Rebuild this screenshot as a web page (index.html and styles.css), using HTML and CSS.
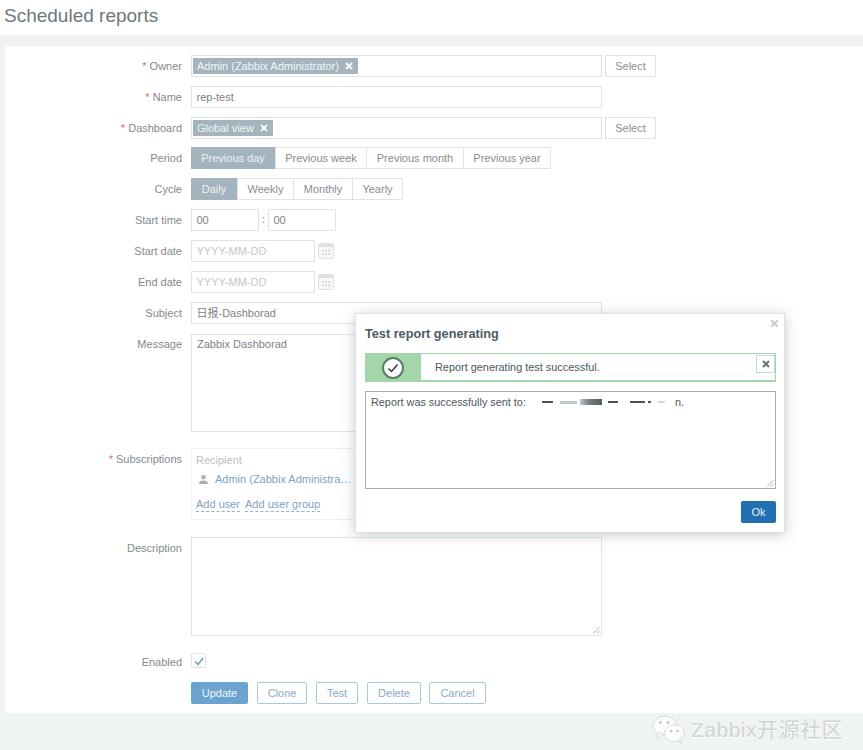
FILE: index.html
```html
<!DOCTYPE html>
<html lang="en">
<head>
<meta charset="utf-8">
<title>Scheduled reports</title>
<link rel="stylesheet" href="styles.css">
</head>
<body>
<header class="page-head"><h1>Scheduled reports</h1></header>
<main class="panel">
  <form class="form">
    <div class="row"><label class="lbl"><span class="req">*</span> Owner</label>
      <div class="field"><div class="box w411"><span class="tag">Admin (Zabbix Administrator) <svg class="tag-x" viewBox="0 0 10 10"><path d="M2 2l6 6M8 2l-6 6"/></svg></span></div><span class="btn-select">Select</span></div></div>
    <div class="row"><label class="lbl"><span class="req">*</span> Name</label>
      <div class="field"><div class="box w411 text">rep-test</div></div></div>
    <div class="row"><label class="lbl"><span class="req">*</span> Dashboard</label>
      <div class="field"><div class="box w411"><span class="tag">Global view <svg class="tag-x" viewBox="0 0 10 10"><path d="M2 2l6 6M8 2l-6 6"/></svg></span></div><span class="btn-select">Select</span></div></div>
    <div class="row period"><label class="lbl">Period</label>
      <div class="field"><div class="seg"><span class="on p1">Previous day</span><span class="p2">Previous week</span><span class="p3">Previous month</span><span class="p4">Previous year</span></div></div></div>
    <div class="row"><label class="lbl">Cycle</label>
      <div class="field"><div class="seg"><span class="on c1">Daily</span><span class="c2">Weekly</span><span class="c3">Monthly</span><span class="c4">Yearly</span></div></div></div>
    <div class="row"><label class="lbl">Start time</label>
      <div class="field"><div class="box w68 text">00</div><span class="colon">:</span><div class="box w68 text">00</div></div></div>
    <div class="row"><label class="lbl">Start date</label>
      <div class="field"><div class="box w124 text ph">YYYY-MM-DD</div><svg class="cal" viewBox="0 0 16 16"><rect x="0.5" y="0.5" width="15" height="15" rx="1" class="cal-bg"/><rect x="1" y="1" width="14" height="3" class="cal-top"/><path class="cal-dots" d="M4 7h2v1.500H4zM7 7h2v1.500H7zM10 7h2v1.500h-2zM4 10.500h2V12H4zM7 10.500h2V12H7zM10 10.500h2V12h-2z"/></svg></div></div>
    <div class="row"><label class="lbl">End date</label>
      <div class="field"><div class="box w124 text ph">YYYY-MM-DD</div><svg class="cal" viewBox="0 0 16 16"><rect x="0.5" y="0.5" width="15" height="15" rx="1" class="cal-bg"/><rect x="1" y="1" width="14" height="3" class="cal-top"/><path class="cal-dots" d="M4 7h2v1.500H4zM7 7h2v1.500H7zM10 7h2v1.500h-2zM4 10.500h2V12H4zM7 10.500h2V12H7zM10 10.500h2V12h-2z"/></svg></div></div>
    <div class="row"><label class="lbl">Subject</label>
      <div class="field"><div class="box w411 text">日报-Dashborad</div></div></div>
    <div class="row message"><label class="lbl">Message</label>
      <div class="field"><div class="box area w411 text">Zabbix Dashborad</div></div></div>
    <div class="row subs"><label class="lbl"><span class="req">*</span> Subscriptions</label>
      <div class="field"><div class="subs-box">
        <div class="subs-head">Recipient</div>
        <div class="subs-user"><svg class="user-ico" viewBox="0 0 12 12"><circle cx="6" cy="3.500" r="2.500"/><path d="M1 11c0-3 2-4 5-4s5 1 5 4z"/></svg><span class="link">Admin (Zabbix Administra…</span></div>
        <div class="subs-add"><span class="dash">Add user</span><span class="dash">Add user group</span></div>
      </div></div></div>
    <div class="row desc"><label class="lbl">Description</label>
      <div class="field"><div class="box area w411 resize"><svg class="grip" viewBox="0 0 8 8"><path d="M7.500 1L1 7.500M7.500 4.500L4.500 7.500"/></svg></div></div></div>
    <div class="row enabled"><label class="lbl">Enabled</label>
      <div class="field"><span class="check"><svg viewBox="0 0 12 12"><path d="M2 6.500l3 3 5-6.500"/></svg></span></div></div>
    <div class="row actions"><span class="lbl"></span>
      <div class="field btns"><span class="btn primary">Update</span><span class="btn b-clone">Clone</span><span class="btn b-test">Test</span><span class="btn b-delete">Delete</span><span class="btn b-cancel">Cancel</span></div></div>
  </form>
</main>
<footer class="foot">
  <div class="mark">
    <svg class="wechat" viewBox="0 0 32 28"><ellipse cx="12" cy="10" rx="11" ry="9"/><path d="M6 16l-1 6 6-4z"/><ellipse cx="21" cy="17" rx="9.500" ry="8"/><path d="M25 23l3 4-1-6z"/><circle class="eye" cx="8" cy="7" r="1.300"/><circle class="eye" cx="15" cy="7" r="1.300"/><circle class="eye" cx="18" cy="15" r="1.100"/><circle class="eye" cx="24" cy="15" r="1.100"/></svg>
    <span>Zabbix开源社区</span>
  </div>
</footer>
<section class="dialog">
  <svg class="dlg-close" viewBox="0 0 10 10"><path d="M2 2l6 6M8 2l-6 6"/></svg>
  <h2>Test report generating</h2>
  <div class="banner">
    <div class="banner-ico"><svg viewBox="0 0 24 24"><circle cx="12" cy="12" r="10" class="ring"/><path d="M7.500 12.500l3 3 6-7" class="tick"/></svg></div>
    <div class="banner-msg">Report generating test successful.</div>
    <span class="banner-x"><svg viewBox="0 0 10 10"><path d="M2 2l6 6M8 2l-6 6"/></svg></span>
  </div>
  <div class="result"><span>Report was successfully sent to:</span>
    <span class="blur"><i class="d1"></i><i class="d2"></i><i class="d3"></i><i class="d4"></i><i class="d5"></i><i class="d6"></i><i class="d7"></i></span><span>n.</span>
    <svg class="grip" viewBox="0 0 8 8"><path d="M7.500 1L1 7.500M7.500 4.500L4.500 7.500"/></svg>
  </div>
  <div class="dlg-foot"><span class="ok">Ok</span></div>
</section>
</body>
</html>
```
FILE: styles.css
```css
* { box-sizing: border-box; }
html, body { margin: 0; padding: 0; }
body {
  width: 863px; height: 750px; overflow: hidden; position: relative;
  background: #f0f3f4; color: #7d8387;
  font: 11px/14px "Liberation Sans", "Noto Sans CJK SC", sans-serif;
}
.page-head { height: 35px; background: #fff; padding: 5px 4px 0; }
h1 { margin: 0; font-size: 19px; line-height: 21px; font-weight: 400; color: #70777b; }
.panel { margin: 11px 0 0 5px; height: 667px; background: #fff; padding-top: 9px; }
.form { display: flex; flex-direction: column; gap: 9px; }
.row { display: flex; min-height: 22px; }
.period { margin-top: -1px; }
.lbl { width: 177px; margin-right: 9px; text-align: right; padding-top: 4px; flex: none; color: #84898d; }
.req { color: #e06a60; }
.field { display: flex; align-items: flex-start; }
.box { height: 22px; border: 1px solid #dfe3e5; background: #fff; padding: 2px 1px; }
.box.text { padding: 3px 4.500px; color: #7d8387; line-height: 15px; }
.box.ph { color: #c3c7c9; }
.w411 { width: 411px; }
.w68 { width: 68px; }
.w124 { width: 124px; }
.tag { display: inline-flex; align-items: center; height: 16px; padding: 0 4px; background: #a3b4be; color: #f2f5f6; border-radius: 1px; }
.tag-x { width: 10px; height: 10px; margin-left: 5px; fill: none; stroke: #f4f6f7; stroke-width: 2.200; }
.btn-select { width: 51px; height: 22px; margin-left: 3px; border: 1px solid #dfe3e5; text-align: center; line-height: 20px; color: #8b9093; }
.seg { display: flex; height: 22px; border: 1px solid #dfe3e5; border-radius: 1px; }
.seg span { border-left: 1px solid #dfe3e5; text-align: center; line-height: 20px; color: #878c90; }
.seg span:first-child { border-left: 0; }
.seg .on { background: #a3b4be; color: #eef2f4; }
.p1 { width: 84px; margin: -1px 0 -1px -1px; line-height: 22px !important; }
.p2 { width: 91px; }
.p3 { width: 97px; }
.p4 { width: 87px; }
.c1 { width: 46px; margin: -1px 0 -1px -1px; line-height: 22px !important; }
.c2 { width: 56px; }
.c3 { width: 59px; }
.c4 { width: 50px; }
.colon { width: 9px; text-align: center; line-height: 20px; }
.cal { width: 16px; height: 16px; margin: 3px 0 0 3px; }
.cal-bg { fill: #f6f7f8; stroke: #dfe3e5; }
.cal-top { fill: #dde1e3; }
.cal-dots { fill: #d2d7da; }
.area { height: 99px; position: relative; }
.message { margin-top: 1px; }
.message .lbl { padding-top: 3px; }
.message .box { height: 98px; padding: 2px 5px; line-height: 15px; }
.subs { margin-top: 7px; }
.subs-box { width: 411px; height: 72px; border: 1px solid #eef0f1; padding: 4px 4px; }
.subs-head { color: #bcc1c4; line-height: 14px; }
.subs-user { display: flex; align-items: center; gap: 6px; margin: 3px 0 0 2px; height: 18px; }
.user-ico { width: 11px; height: 11px; fill: #a9b0b4; }
.link { color: #7ea3c4; }
.subs-add { display: flex; gap: 5px; margin-top: 10px; }
.dash { color: #7ea3c4; border-bottom: 1px dashed #8fb2cf; line-height: 13px; }
.desc { margin-top: 8px; }
.resize .grip { position: absolute; right: 1px; bottom: 1px; }
.grip { width: 8px; height: 8px; fill: none; stroke: #9ca3a7; stroke-width: .8; }
.enabled { margin-top: 7px; min-height: 19px; }
.enabled .lbl { padding-top: 3px; }
.check { width: 15px; height: 15px; margin-top: 1px; border: 1px solid #dfe3e5; border-radius: 2px; display: flex; align-items: center; justify-content: center; }
.check svg { width: 12px; height: 12px; fill: none; stroke: #6ea5cf; stroke-width: 1.600; }
.actions { margin-top: 2px; }
.btns { gap: 9px; }
.btn { height: 22px; border: 1px solid #a9c8df; border-radius: 2px; color: #8aaac4; line-height: 20px; text-align: center; }
.b-clone { width: 50px; }
.b-test { width: 42px; }
.b-delete { width: 54px; }
.b-cancel { width: 57px; margin-left: -1px; }
.btn.primary { width: 57px; border: 0; background: #6aa3d0; color: #eef5fa; line-height: 22px; }
.foot { position: relative; height: 37px; }
.mark { position: absolute; right: 20px; top: 1px; display: flex; align-items: center; gap: 5px; font-size: 21px; line-height: 32px; color: #cfd3d5; text-shadow: 0 1px 0 #fff; }
.mark span { letter-spacing: .5px; }
.wechat { width: 34px; height: 30px; fill: #fbfcfc; stroke: #cfd3d5; stroke-width: .7; }
.eye { fill: #b9bec1; stroke: none; }
.dialog {
  position: absolute; left: 355px; top: 313px; width: 430px; height: 220px;
  background: #fff; border: 1px solid #dde1e3; box-shadow: 0 2px 12px rgba(90, 105, 115, .35);
  padding: 0 8px 0 9px; color: #4b5358;
}
h2 { margin: 0; padding-top: 12px; height: 39px; font-size: 12.700px; line-height: 16px; font-weight: 700; color: #4d5a62; }
.dlg-close { position: absolute; right: 4px; top: 4px; width: 11px; height: 11px; fill: none; stroke: #c9cdd0; stroke-width: 2; }
.banner { display: flex; align-items: center; height: 29px; width: 411px; border: 1px solid #a3d6a8; border-bottom-width: 2px; position: relative; }
.banner-ico { width: 56px; height: 29px; margin: -1px 0 -2px -1px; flex: none; background: #a3d6a8; display: flex; align-items: center; justify-content: center; }
.banner-ico svg { width: 24px; height: 24px; }
.ring { fill: #fff; stroke: #5e7d63; stroke-width: 2; }
.tick { fill: none; stroke: #2f3a36; stroke-width: 1.500; }
.banner-msg { padding-left: 14px; font-size: 10.900px; color: #4f565a; }
.banner-x { position: absolute; right: 0; top: 1px; width: 19px; height: 18px; border: 1px solid #bcd8ee; display: flex; align-items: center; justify-content: center; }
.banner-x svg { width: 10px; height: 10px; fill: none; stroke: #68727a; stroke-width: 2; }
.result { position: relative; margin-top: 9px; width: 411px; height: 98px; border: 1px solid #a8b0b4; padding: 3px 5px; display: flex; align-items: flex-start; font-size: 10.850px; color: #4f565a; line-height: 14px; }
.result .grip { position: absolute; right: 1px; bottom: 1px; }
.blur { display: flex; align-items: center; height: 14px; margin-left: 16px; width: 133px; }
.blur i { display: block; height: 2px; background: #4c5257; }
.blur .d1 { width: 11px; margin-right: 7px; }
.blur .d2 { width: 17px; height: 3px; background: #c4c9cc; margin-right: 3px; }
.blur .d3 { width: 22px; height: 6px; background: linear-gradient(90deg, #c4c9cc, #777d81 40%, #555b5f); margin-right: 6px; }
.blur .d4 { width: 10px; margin-right: 12px; }
.blur .d5 { width: 15px; margin-right: 3px; }
.blur .d6 { width: 3px; margin-right: 7px; }
.blur .d7 { width: 7px; background: #d5d9db; }
.dlg-foot { display: flex; justify-content: flex-end; margin-top: 12px; }
.ok { width: 35px; height: 22px; background: #2170b4; color: #e7f0f7; text-align: center; line-height: 22px; border-radius: 2px; }
```
